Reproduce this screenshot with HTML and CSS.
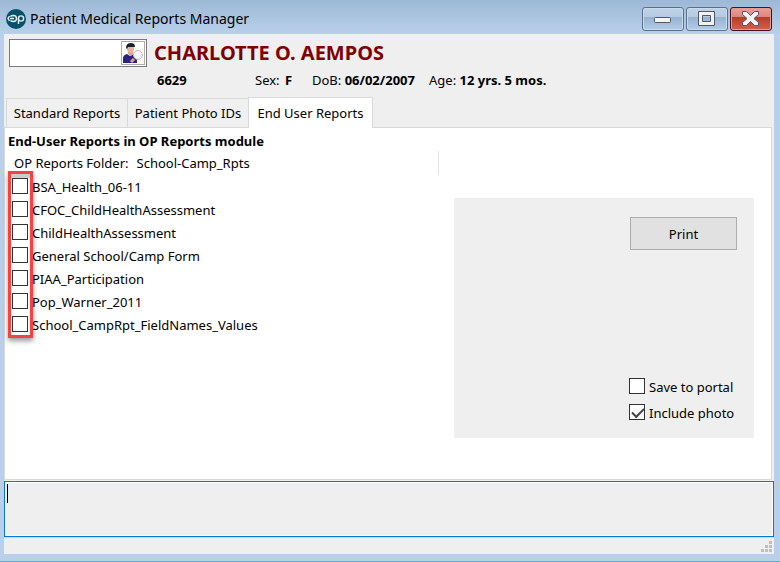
FILE: index.html
```html
<!DOCTYPE html>
<html lang="en">
<head>
  <meta charset="UTF-8" />
  <meta name="viewport" content="width=device-width, initial-scale=1.0"/>
  <title>Patient Medical Reports Manager</title>
  <link rel="stylesheet" href="styles.css">
</head>
<body>

  <header class="titlebar">
    <svg class="logo" viewBox="0 0 20 20" aria-hidden="true">
      <circle cx="10" cy="10" r="10" fill="#075268"/>
      <g fill="none" stroke="#e6eff2" stroke-width="1.400">
        <path d="M4 9.500h4M3.500 7l-1.500 2.500 1.500 2.500"/>
        <path d="M4.500 7.500q1-1 3-1 3 0 3 3t-3 3q-2 0-3-1"/>
        <circle cx="15" cy="9.500" r="2.600"/>
        <path d="M12.500 9v6"/>
      </g>
    </svg>
    <h1>Patient Medical Reports Manager</h1>
    <div class="window-buttons">
      <button class="win-btn" aria-label="Minimize">
        <svg viewBox="0 0 42 24"><rect x="12.500" y="10.500" width="16" height="5" rx="1" fill="#f4f4f4" stroke="#4f5868"/></svg>
      </button>
      <button class="win-btn" aria-label="Maximize">
        <svg viewBox="0 0 42 24"><path d="M12.500 4.500h16v14h-16zM16.500 8.500v6h8v-6z" fill="#f1f1f1" fill-rule="evenodd" stroke="#4f5868"/></svg>
      </button>
      <button class="win-btn close" aria-label="Close">
        <svg viewBox="0 0 42 24"><path d="M12.500 4.500h4l4 4 4-4h4v3l-4.500 4 4.500 4v3h-4l-4-4-4 4h-4v-3l4.500-4-4.500-4z" fill="#f4f4f4" stroke="#4f5868" stroke-linejoin="round"/></svg>
      </button>
    </div>
  </header>

  <main class="window">
    <section class="patient">
      <div class="search">
        <input type="text" aria-label="Patient search">
        <button class="find" aria-label="Find patient">
          <svg viewBox="0 0 22 22">
            <path d="M1 21v-5q0-3 4-4l3 2 4-2q3 1 3 4v5z" fill="#2b2187"/>
            <path d="M6 9h5v3l-2 2-3-2z" fill="#dfa28c"/>
            <ellipse cx="8.500" cy="7" rx="3.500" ry="4" fill="#e8b49f"/>
            <path d="M4 6q0-5 5-5 4 0 4 4l-2 0-5 0-1 2z" fill="#17242e"/>
            <circle cx="16" cy="13" r="4.500" fill="#f3f3fa" stroke="#d2b9a7"/>
            <path d="M12 17l-3 3" stroke="#e0a184" stroke-width="3"/>
          </svg>
        </button>
      </div>
      <div class="details">
        <h2>CHARLOTTE O. AEMPOS</h2>
        <div class="facts">
          <b class="chart-no">6629</b>
          <span class="sex">Sex: <b>F</b></span>
          <span class="dob">DoB: <b>06/02/2007</b></span>
          <span>Age: <b>12 yrs. 5 mos.</b></span>
        </div>
      </div>
    </section>

    <nav class="tabs" role="tablist">
      <button class="tab" role="tab">Standard Reports</button>
      <button class="tab" role="tab">Patient Photo IDs</button>
      <button class="tab active" role="tab" aria-selected="true">End User Reports</button>
    </nav>

    <section class="panel">
      <div class="reports">
        <h3>End-User Reports in OP Reports module</h3>
        <p class="folder"><span>OP Reports Folder:</span><span>School-Camp_Rpts</span></p>
        <div class="report-list">
          <label><input type="checkbox">BSA_Health_06-11</label>
          <label><input type="checkbox">CFOC_ChildHealthAssessment</label>
          <label><input type="checkbox">ChildHealthAssessment</label>
          <label><input type="checkbox">General School/Camp Form</label>
          <label><input type="checkbox">PIAA_Participation</label>
          <label><input type="checkbox">Pop_Warner_2011</label>
          <label><input type="checkbox">School_CampRpt_FieldNames_Values</label>
          <div class="highlight"></div>
        </div>
      </div>
      <div class="actions">
        <button class="print">Print</button>
        <div class="options">
          <label><input type="checkbox">Save to portal</label>
          <label><input type="checkbox" checked>Include photo</label>
        </div>
      </div>
    </section>

    <div class="notes">
      <textarea aria-label="Notes"></textarea>
      <span class="caret"></span>
    </div>

    <footer class="status">
      <svg class="grip" viewBox="0 0 11 11" fill="#bfbfbf" aria-hidden="true">
        <path d="M8 0h3v3h-3zM4 4h3v3h-3zM8 4h3v3h-3zM0 8h3v3h-3zM4 8h3v3h-3zM8 8h3v3h-3z"/>
      </svg>
    </footer>
  </main>

</body>
</html>
```
FILE: styles.css
```css
* {
  box-sizing: border-box;
}

body {
  margin: 0;
  min-height: 100vh;
  display: flex;
  flex-direction: column;
  padding: 0 6px 7px 4px;
  background: linear-gradient(#9db8d6, #b9d0ea 34px, #b9d0ea);
  border-bottom: 1px solid #22c8e8;
  font: 13px/20px "Segoe UI", "Noto Sans", sans-serif;
  color: #000;
}

h1, h2, h3, p {
  margin: 0;
}

button, input, textarea {
  font: inherit;
  color: inherit;
}

/* title bar */
.titlebar {
  height: 34px;
  display: flex;
  align-items: center;
  padding: 4px 2px 0;
}

.logo {
  width: 20px;
  height: 20px;
  margin-right: 4px;
}

h1 {
  font-size: 14px;
  font-weight: normal;
}

.window-buttons {
  margin-left: auto;
  display: flex;
  gap: 2px;
}

.win-btn {
  width: 42px;
  height: 24px;
  padding: 0;
  border: 1px solid #5c708c;
  border-radius: 3px;
  background: linear-gradient(#c0d2e6, #b5cbe2 42%, #97b1cf 42%, #b3cde9);
  box-shadow: inset 0 0 0 1px #c9dbef;
}

.win-btn svg {
  display: block;
  width: 42px;
  height: 24px;
  margin: -1px;
}

.close {
  border-color: #4a1020;
  background: linear-gradient(#e6a298, #d8877b 42%, #b43c25 42%, #cc6650);
  box-shadow: inset 0 0 0 1px #e39c8e;
}

/* window content */
.window {
  flex: 1;
  display: flex;
  flex-direction: column;
  background: #efefef;
}

.patient {
  display: flex;
  align-items: flex-start;
  gap: 7px;
  padding: 5px 5px 0;
}

.search {
  display: flex;
  width: 138px;
  height: 28px;
  padding: 1px;
  background: #fff;
  border: 1px solid #7a7a7a;
}

.search input {
  flex: 1;
  min-width: 0;
  border: 0;
  outline: 0;
}

.find {
  width: 24px;
  padding: 0;
  background: #fff;
  border: 1px solid #adadad;
}

.find svg {
  display: block;
  width: 22px;
  height: 22px;
}

h2 {
  font-size: 20px;
  line-height: 28px;
  color: #800000;
}

.facts {
  display: flex;
  padding: 3px 0 0 3px;
}

.chart-no {
  width: 98px;
}

.sex {
  width: 57px;
}

.sex b {
  margin-left: 2px;
}

.dob {
  width: 117px;
}

/* tabs */
.tabs {
  display: flex;
  align-items: flex-end;
  height: 31px;
  margin: 7px 0 -1px 2px;
  z-index: 1;
}

.tab {
  width: 122px;
  height: 29px;
  margin-bottom: 1px;
  margin-right: -1px;
  padding: 0;
  background: #f0f0f0;
  border: 1px solid #d9d9d9;
  border-bottom: 0;
  white-space: nowrap;
}

.tab.active {
  width: 125px;
  height: 31px;
  margin-bottom: 0;
  background: #fff;
}

.panel {
  flex: 1;
  display: flex;
  justify-content: space-between;
  margin-right: 2px;
  padding: 3px 17px 0 3px;
  background: #fff;
  border: 1px solid #d9d9d9;
}

.reports {
  flex: 1;
}

h3 {
  font-size: 13px;
  line-height: 20px;
}

.folder {
  width: 431px;
  display: flex;
  gap: 8px;
  padding: 2px 0 2px 6px;
  border-right: 1px solid #e3e3e3;
}

/* check boxes */
input[type="checkbox"] {
  appearance: none;
  width: 16px;
  height: 16px;
  margin: 0 0 2px;
  background: #fff;
  border: 1px solid #333;
}

input[type="checkbox"]:checked::after {
  content: "";
  display: block;
  width: 10px;
  height: 5px;
  margin: 3px 2px;
  border: solid #444;
  border-width: 0 0 2px 2px;
  transform: rotate(-45deg);
}

label {
  display: flex;
  align-items: center;
  gap: 4px;
}

.report-list {
  position: relative;
  padding-left: 4px;
}

.report-list label {
  height: 23px;
}

.highlight {
  position: absolute;
  top: -4px;
  bottom: -2px;
  left: 0;
  width: 25px;
  border: 3px solid #f94144;
  box-shadow: 0 3px 5px rgba(0, 0, 0, 0.4), inset 0 4px 1px rgba(0, 0, 0, 0.2);
  pointer-events: none;
}

/* print box */
.actions {
  display: flex;
  flex-direction: column;
  justify-content: space-between;
  align-items: flex-end;
  width: 300px;
  height: 240px;
  margin-top: 67px;
  padding: 19px 17px 12px;
  background: #efefef;
}

.print {
  width: 107px;
  height: 33px;
  background: #e1e1e1;
  border: 1px solid #adadad;
}

.options {
  width: 108px;
  white-space: nowrap;
}

.options label {
  height: 26px;
}

/* notes and status bar */
.notes {
  position: relative;
  display: flex;
  margin-top: 1px;
}

.notes textarea {
  flex: 1;
  height: 56px;
  background: #efefef;
  border: 1px solid #0078d7;
  box-shadow: inset 0 0 0 1px #fff;
  outline: 0;
  resize: none;
}

.caret {
  position: absolute;
  top: 3px;
  left: 3px;
  width: 1px;
  height: 19px;
  background: #000;
}

.status {
  display: flex;
  justify-content: flex-end;
  align-items: flex-end;
  height: 17px;
  padding: 2px;
  border-top: 1px solid #d7d7d7;
}

.grip {
  width: 11px;
  height: 11px;
}
```
